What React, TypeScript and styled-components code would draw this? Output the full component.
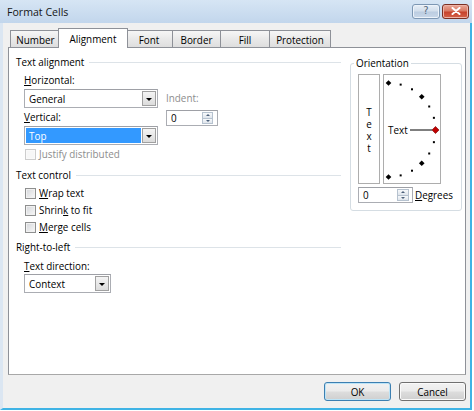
import React from "react";
import styled, { createGlobalStyle } from "styled-components";

const GlobalStyle = createGlobalStyle`
  html, body { margin: 0; padding: 0; background: #ffffff; }
  body {
    font-family: "Open Sans", "Noto Sans", "Liberation Sans", sans-serif;
    font-size: 9.9px;
    color: #000;
  }
  * { box-sizing: border-box; }
`;

const Window = styled.div`
  width: 472px;
  height: 410px;
  display: flex;
  flex-direction: column;
`;

const TitleBar = styled.div`
  height: 23px;
  display: flex;
  align-items: center;
  padding: 0 3px 0 7px;
  background: linear-gradient(#d6e5f4, #c2d6ec);
`;

const Title = styled.span`
  font-size: 10.6px;
  color: #151515;
`;

const CaptionButtons = styled.div`
  margin-left: auto;
  display: flex;
  gap: 2px;
  margin-top: -1px;
`;

const CaptionButton = styled.div<{ $close?: boolean }>`
  width: ${(p) => (p.$close ? 27 : 28)}px;
  height: 15px;
  border-radius: 3px;
  display: flex;
  align-items: center;
  justify-content: center;
  border: 1px solid ${(p) => (p.$close ? "#7b3023" : "#7d97b3")};
  background: ${(p) =>
    p.$close
      ? "linear-gradient(#e9a797 0%, #d97a64 45%, #c7422c 55%, #d4634a 100%)"
      : "linear-gradient(#e8eff7 0%, #d3dfec 45%, #bccde1 55%, #c9d8e9 100%)"};
  box-shadow: inset 0 0 0 1px ${(p) => (p.$close ? "#eeb3a6" : "#edf3fa")};
  color: #56687c;
  font-family: "DejaVu Sans", sans-serif;
  font-size: 10px;
  line-height: 1;
`;

const Body = styled.div`
  flex: 1;
  display: flex;
  flex-direction: column;
  background: #f0f0f0;
  border-left: 3px solid #dbe6f2;
  border-right: 2px solid #3fb3e5;
  border-bottom: 2px solid #3fb3e5;
  padding: 5px 4px 0 5px;
`;

const TabRow = styled.div`
  height: 20px;
  display: flex;
  align-items: flex-end;
  padding-left: 2px;
  margin-bottom: -1px;
  position: relative;
  z-index: 1;
`;

const Tab = styled.div<{ $w: number; $active?: boolean; $first?: boolean }>`
  width: ${(p) => p.$w}px;
  height: ${(p) => (p.$active ? 20 : 17)}px;
  margin-bottom: ${(p) => (p.$active ? 0 : 1)}px;
  margin-left: ${(p) => (p.$first ? 0 : p.$active ? -3 : -1)}px;
  margin-right: ${(p) => (p.$active ? -2 : 0)}px;
  padding-top: ${(p) => (p.$active ? 3 : 2)}px;
  line-height: 14px;
  text-align: center;
  border: 1px solid #8e9198;
  border-bottom: none;
  background: ${(p) =>
    p.$active ? "#ffffff" : "linear-gradient(#f6f6f6, #e9e9e9 50%, #dedede)"};
  position: relative;
  z-index: ${(p) => (p.$active ? 2 : 1)};
`;

const Panel = styled.div`
  height: 328px;
  background: #ffffff;
  border: 1px solid #8e9198;
  border-bottom-color: #a8a8a8;
  display: flex;
  align-items: flex-start;
`;

const LeftCol = styled.div`
  width: 332px;
  padding: 7px 0 0 7px;
  display: flex;
  flex-direction: column;
`;

const SectionHeader = styled.div<{ $mt?: number }>`
  height: 14px;
  line-height: 14px;
  margin-top: ${(p) => p.$mt ?? 0}px;
  display: flex;
  align-items: center;
  gap: 5px;
  &::after {
    content: "";
    flex: 1;
    height: 1px;
    background: #dde3e8;
  }
`;

const Indented = styled.div<{ $mt?: number }>`
  padding-left: 8px;
  margin-top: ${(p) => p.$mt ?? 0}px;
  display: flex;
  flex-direction: column;
`;

const AlignGrid = styled.div`
  display: flex;
  gap: 8px;
`;

const Column = styled.div<{ $pt?: number }>`
  display: flex;
  flex-direction: column;
  padding-top: ${(p) => p.$pt ?? 0}px;
`;

const Label = styled.div<{ $mt?: number; $disabled?: boolean }>`
  height: 14px;
  line-height: 14px;
  margin-top: ${(p) => p.$mt ?? 0}px;
  color: ${(p) => (p.$disabled ? "#8d8d8d" : "#000")};
  white-space: nowrap;
`;

const Combo = styled.div<{ $w: number; $mt?: number }>`
  width: ${(p) => p.$w}px;
  height: 19px;
  margin-top: ${(p) => p.$mt ?? 0}px;
  display: flex;
  border: 1px solid #abadb3;
  border-top-color: #9ea0a6;
  background: #ffffff;
`;

const ComboValue = styled.div<{ $selected?: boolean }>`
  flex: 1;
  margin: 1px;
  padding-left: 3px;
  display: flex;
  align-items: center;
  background: ${(p) => (p.$selected ? "#3399ff" : "transparent")};
  color: ${(p) => (p.$selected ? "#ffffff" : "#000")};
`;

const ComboArrow = styled.div`
  width: 14px;
  margin: 1px 1px 1px 0;
  border: 1px solid #a0a0a0;
  background: linear-gradient(#f4f4f4, #dcdcdc);
  display: flex;
  align-items: center;
  justify-content: center;
  &::before {
    content: "";
    border-left: 3px solid transparent;
    border-right: 3px solid transparent;
    border-top: 3px solid #000;
    margin-top: 1px;
  }
`;

const Spinner = styled.div<{ $w: number; $pr: number; $mt?: number }>`
  width: ${(p) => p.$w}px;
  height: 16px;
  margin-top: ${(p) => p.$mt ?? 0}px;
  border: 1px solid #abadb3;
  border-top-color: #9ea0a6;
  background: #ffffff;
  display: flex;
  align-items: center;
  padding: 0 ${(p) => p.$pr}px 0 4px;
`;

const SpinValue = styled.div`
  flex: 1;
`;

const SpinButtons = styled.div<{ $w: number }>`
  width: ${(p) => p.$w}px;
  height: 12px;
  display: flex;
  flex-direction: column;
`;

const SpinHalf = styled.div<{ $down?: boolean }>`
  flex: 1;
  border: 1px solid #b6c2cf;
  ${(p) => (p.$down ? "border-top: none;" : "")}
  background: linear-gradient(#f7f9fb, #dfe5ec);
  display: flex;
  align-items: center;
  justify-content: center;
  &::before {
    content: "";
    border-left: 2px solid transparent;
    border-right: 2px solid transparent;
    ${(p) =>
      p.$down ? "border-top: 2px solid #4c607a;" : "border-bottom: 2px solid #4c607a;"}
  }
`;

const CheckRow = styled.div<{ $mt?: number; $disabled?: boolean }>`
  height: 14px;
  margin-top: ${(p) => p.$mt ?? 0}px;
  padding-left: 1px;
  display: flex;
  align-items: center;
  gap: 3px;
  color: ${(p) => (p.$disabled ? "#8d8d8d" : "#000")};
`;

const Check = styled.span<{ $disabled?: boolean }>`
  width: 11px;
  height: 11px;
  border: 1px solid ${(p) => (p.$disabled ? "#cdcdcd" : "#8e8f8f")};
  background: ${(p) =>
    p.$disabled ? "#f7f7f7" : "linear-gradient(135deg, #d4d6da, #f8f8f8)"};
  box-shadow: inset 0 0 0 1px ${(p) => (p.$disabled ? "#fafafa" : "#f1f1f1")};
`;

const OrientGroup = styled.fieldset`
  margin: 8px 0 0 9px;
  width: 112px;
  padding: 4px 7px 7px 7px;
  border: 1px solid #d5dde3;
  border-radius: 3px;
  min-width: 0;
`;

const Legend = styled.legend`
  padding: 0 2px;
  margin-left: -4px;
  line-height: 14px;
`;

const OrientRow = styled.div`
  display: flex;
  gap: 3px;
`;

const VerticalText = styled.div`
  width: 22px;
  height: 110px;
  border: 1px solid #adadad;
  display: flex;
  align-items: center;
  justify-content: center;
`;

const UprightText = styled.span`
  writing-mode: vertical-rl;
  text-orientation: upright;
  letter-spacing: -2px;
  line-height: 14px;
`;

const DialBox = styled.div`
  width: 58px;
  height: 110px;
  border: 1px solid #adadad;
  display: flex;
`;

const DegreesRow = styled.div`
  margin-top: 3px;
  display: flex;
  align-items: center;
  gap: 2px;
`;

const Footer = styled.div`
  margin-top: 7px;
  display: flex;
  justify-content: flex-end;
  gap: 8px;
`;

const Button = styled.div<{ $default?: boolean }>`
  width: 67px;
  height: 19px;
  border: 1px solid ${(p) => (p.$default ? "#3c7fb1" : "#707070")};
  border-radius: 3px;
  background: linear-gradient(#f2f2f2 0%, #ebebeb 48%, #dddddd 52%, #cfcfcf 100%);
  box-shadow: inset 0 0 0 1px ${(p) => (p.$default ? "#bde4f7" : "#fafafa")};
  display: flex;
  align-items: center;
  justify-content: center;
`;

const Dial: React.FC = () => {
  const cx = 4.5;
  const cy = 55;
  const r = 47;
  const marks: React.ReactNode[] = [];
  for (let i = 0; i <= 12; i++) {
    const a = (i * 15 * Math.PI) / 180;
    const x = cx + r * Math.sin(a);
    const y = cy - r * Math.cos(a);
    if (i === 6) continue;
    if (i === 0 || i === 3 || i === 9 || i === 12) {
      marks.push(
        <rect
          key={i}
          x={x - 2}
          y={y - 2}
          width={4}
          height={4}
          fill="#000"
          transform={`rotate(45 ${x} ${y})`}
        />
      );
    } else {
      marks.push(<rect key={i} x={x - 1} y={y - 1} width={2} height={2} fill="#000" />);
    }
  }
  const rx = cx + r;
  return (
    <svg width="56" height="108" viewBox="0 0 56 108">
      {marks}
      <text
        x="4"
        y="58.5"
        fontFamily="Open Sans, Noto Sans, sans-serif"
        fontSize="9.9"
        fill="#000"
      >
        Text
      </text>
      <line x1="26" y1="55" x2="48" y2="55" stroke="#000" strokeWidth="1" />
      <rect
        x={rx - 2.5}
        y={cy - 2.5}
        width={5}
        height={5}
        fill="#c00000"
        stroke="#7a0000"
        strokeWidth="0.6"
        transform={`rotate(45 ${rx} ${cy})`}
      />
    </svg>
  );
};

const CloseGlyph: React.FC = () => (
  <svg width="10" height="8" viewBox="0 0 10 8">
    <path
      d="M1.5 1 L8.5 7 M8.5 1 L1.5 7"
      stroke="#ffffff"
      strokeWidth="2"
      strokeLinecap="round"
    />
  </svg>
);

const SpinControl: React.FC<{ w: number; pr: number; bw: number; mt?: number }> = ({
  w,
  pr,
  bw,
  mt,
}) => (
  <Spinner $w={w} $pr={pr} $mt={mt}>
    <SpinValue>0</SpinValue>
    <SpinButtons $w={bw}>
      <SpinHalf />
      <SpinHalf $down />
    </SpinButtons>
  </Spinner>
);

export default function App() {
  return (
    <>
      <GlobalStyle />
      <Window>
        <TitleBar>
          <Title>Format Cells</Title>
          <CaptionButtons>
            <CaptionButton>?</CaptionButton>
            <CaptionButton $close>
              <CloseGlyph />
            </CaptionButton>
          </CaptionButtons>
        </TitleBar>
        <Body>
          <TabRow>
            <Tab $w={51} $first>
              Number
            </Tab>
            <Tab $w={70} $active>
              Alignment
            </Tab>
            <Tab $w={48}>Font</Tab>
            <Tab $w={49}>Border</Tab>
            <Tab $w={50}>Fill</Tab>
            <Tab $w={62}>Protection</Tab>
          </TabRow>
          <Panel>
            <LeftCol>
              <SectionHeader>Text alignment</SectionHeader>
              <Indented $mt={4}>
                <AlignGrid>
                  <Column>
                    <Label>
                      <u>H</u>orizontal:
                    </Label>
                    <Combo $w={134} $mt={2}>
                      <ComboValue>General</ComboValue>
                      <ComboArrow />
                    </Combo>
                    <Label $mt={2}>
                      <u>V</u>ertical:
                    </Label>
                    <Combo $w={134} $mt={2}>
                      <ComboValue $selected>Top</ComboValue>
                      <ComboArrow />
                    </Combo>
                  </Column>
                  <Column $pt={18}>
                    <Label $disabled>Indent:</Label>
                    <SpinControl w={52} pr={4} bw={11} mt={5} />
                  </Column>
                </AlignGrid>
                <CheckRow $mt={2} $disabled>
                  <Check $disabled />
                  Justify distributed
                </CheckRow>
              </Indented>
              <SectionHeader $mt={7}>Text control</SectionHeader>
              <Indented $mt={4}>
                <CheckRow>
                  <Check />
                  <span>
                    <u>W</u>rap text
                  </span>
                </CheckRow>
                <CheckRow $mt={3}>
                  <Check />
                  <span>
                    Shrin<u>k</u> to fit
                  </span>
                </CheckRow>
                <CheckRow $mt={3}>
                  <Check />
                  <span>
                    <u>M</u>erge cells
                  </span>
                </CheckRow>
              </Indented>
              <SectionHeader $mt={6}>Right-to-left</SectionHeader>
              <Indented $mt={5}>
                <Label>
                  <u>T</u>ext direction:
                </Label>
                <Combo $w={87} $mt={1}>
                  <ComboValue>Context</ComboValue>
                  <ComboArrow />
                </Combo>
              </Indented>
            </LeftCol>
            <OrientGroup>
              <Legend>Orientation</Legend>
              <OrientRow>
                <VerticalText>
                  <UprightText>Text</UprightText>
                </VerticalText>
                <DialBox>
                  <Dial />
                </DialBox>
              </OrientRow>
              <DegreesRow>
                <SpinControl w={55} pr={3} bw={12} />
                <span>
                  <u>D</u>egrees
                </span>
              </DegreesRow>
            </OrientGroup>
          </Panel>
          <Footer>
            <Button $default>OK</Button>
            <Button>Cancel</Button>
          </Footer>
        </Body>
      </Window>
    </>
  );
}
